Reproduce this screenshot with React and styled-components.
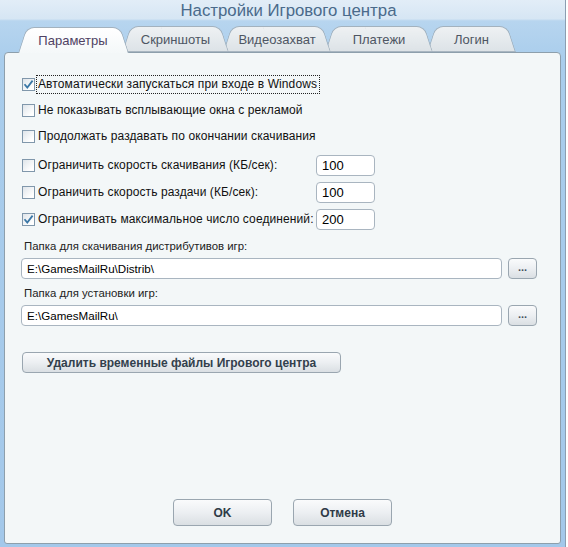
import React from 'react';
import styled, { createGlobalStyle, css } from 'styled-components';

const GlobalStyle = createGlobalStyle`
  html, body {
    margin: 0;
    padding: 0;
    background: #ffffff;
  }
  body {
    font-family: 'Liberation Sans', Arial, sans-serif;
    font-size: 12px;
    color: #111;
  }
`;

const Window = styled.div`
  width: 566px;
  height: 547px;
  box-sizing: border-box;
  border-right: 1px solid #8b9eb1;
  background: linear-gradient(
    180deg,
    #e2edf7 0px,
    #d6e6f4 19px,
    #c3dbf0 20px,
    #b7d5ef 21px,
    #a9cdec 60px,
    #a3c8ea 100%
  );
  display: flex;
  flex-direction: column;
`;

const TitleBar = styled.div`
  height: 20px;
  line-height: 21px;
  text-align: center;
  font-size: 16.8px;
  color: #4a6a8b;
  padding-left: 12px;
`;

const TabStrip = styled.div`
  height: 32px;
  display: flex;
  align-items: flex-end;
  padding-left: 18px;
`;

const Tab = styled.div`
  position: relative;
  height: 26px;
  width: ${(p) => p.$w}px;
  margin-left: ${(p) => (p.$first ? 0 : -6)}px;
  margin-bottom: ${(p) => (p.$active ? -1 : 0)}px;
  z-index: ${(p) => (p.$active ? 10 : 5 - p.$index)};
  display: flex;
  align-items: center;
  justify-content: center;
  font-size: 13px;
  color: ${(p) => (p.$active ? '#4f4263' : '#4e5663')};
  padding-top: 1px;
  box-sizing: border-box;

  &::before,
  &::after {
    content: '';
    position: absolute;
    top: 0;
    bottom: 0;
    width: 55%;
    transform-origin: bottom;
    border-top: 1px solid #a3b2be;
    ${(p) =>
      p.$active
        ? css`
            background: linear-gradient(180deg, #ffffff 0%, #f4f8f9 100%);
          `
        : css`
            background: linear-gradient(180deg, #eef1f3 0%, #dde3e7 100%);
            border-bottom: 1px solid #a9b6c1;
          `}
  }
  &::before {
    left: 0;
    border-left: 1px solid #a3b2be;
    border-top-left-radius: 8px;
    transform: skewX(-18deg);
  }
  &::after {
    right: 0;
    border-right: 1px solid #a3b2be;
    border-top-right-radius: 8px;
    transform: skewX(18deg);
  }
`;

const TabText = styled.span`
  position: relative;
  z-index: 1;
`;

const Panel = styled.div`
  flex: 1;
  margin: 0 4px 3px 4px;
  border: 1px solid #8d9fac;
  border-radius: 4px 4px 3px 3px;
  background: #f3f7f8;
  padding: 18px 20px 17px 16px;
  display: flex;
  flex-direction: column;
`;

const CheckRow = styled.div`
  height: 26px;
  display: flex;
  align-items: center;
`;

const FieldRow = styled.div`
  height: 27px;
  margin-top: ${(p) => p.$mt || 0}px;
  display: grid;
  grid-template-columns: 295px 59px;
  align-items: center;
`;

const Check = styled.span`
  width: 11px;
  height: 11px;
  flex: none;
  border: 1px solid #8097ab;
  background: linear-gradient(135deg, #dfe5ea 0%, #ffffff 80%);
  margin: 0 3px 0 1px;
  display: inline-flex;
  align-items: center;
  justify-content: center;
`;

const CheckLabel = styled.label`
  display: flex;
  align-items: center;
  white-space: nowrap;
  letter-spacing: 0.1px;
`;

const LabelText = styled.span`
  padding: 1px 2px 2px 0;
  ${(p) =>
    p.$focus &&
    css`
      outline: 1px dotted #222;
      outline-offset: 0px;
      padding: 1px 2px 2px 1px;
      margin-left: -1px;
    `}
`;

const SmallInput = styled.div`
  height: 21px;
  box-sizing: border-box;
  border: 1px solid #a9b5c0;
  border-radius: 4px;
  background: #fff;
  font-size: 13px;
  line-height: 19px;
  padding-left: 5px;
  color: #000;
`;

const FolderLabel = styled.div`
  margin-top: ${(p) => p.$mt}px;
  padding-left: 3px;
  height: 16px;
  line-height: 16px;
  font-size: 11.4px;
  color: #222;
`;

const PathRow = styled.div`
  margin-top: 4px;
  display: flex;
  gap: 6px;
  align-items: center;
`;

const PathInput = styled.div`
  width: 481px;
  height: 21px;
  box-sizing: border-box;
  border: 1px solid #a9b5c0;
  border-radius: 4px;
  background: #fff;
  font-size: 11.6px;
  line-height: 19px;
  padding-left: 5px;
  color: #000;
`;

const buttonBase = css`
  box-sizing: border-box;
  border: 1px solid #9aa6b0;
  border-radius: 4px;
  background: linear-gradient(180deg, #fafbfc 0%, #eceff2 50%, #dadfe3 100%);
  display: flex;
  align-items: center;
  justify-content: center;
  font-family: 'Liberation Sans', Arial, sans-serif;
  color: #2d3a46;
  padding: 0;
`;

const DotsButton = styled.button`
  ${buttonBase};
  width: 29px;
  height: 21px;
  font-size: 11px;
  font-weight: bold;
  line-height: 1;
  padding-bottom: 3px;
  color: #44505c;
`;

const WideButton = styled.button`
  ${buttonBase};
  margin-top: 26px;
  margin-left: 1px;
  width: 319px;
  height: 21px;
  font-size: 12px;
  font-weight: bold;
  color: #33404c;
`;

const Footer = styled.div`
  margin-top: auto;
  display: flex;
  justify-content: center;
  gap: 21px;
  padding-left: 4px;
`;

const DialogButton = styled.button`
  ${buttonBase};
  width: 99px;
  height: 27px;
  font-size: 12px;
  font-weight: bold;
  color: #2f3b47;
`;

const CheckMark = () => (
  <svg width="11" height="11" viewBox="0 0 11 11">
    <path d="M1.5 5.2 L4.3 8.6 L9.6 1.6" fill="none" stroke="#3a77a6" strokeWidth="1.8" />
  </svg>
);

const CheckItem = ({ checked, focus, children }) => (
  <CheckLabel>
    <Check>{checked && <CheckMark />}</Check>
    <LabelText $focus={focus}>{children}</LabelText>
  </CheckLabel>
);

const tabs = [
  { title: 'Параметры', w: 110 },
  { title: 'Скриншоты', w: 107 },
  { title: 'Видеозахват', w: 108 },
  { title: 'Платежи', w: 108 },
  { title: 'Логин', w: 89 },
];

export default function App() {
  return (
    <>
      <GlobalStyle />
      <Window>
        <TitleBar>Настройки Игрового центра</TitleBar>
        <TabStrip>
          {tabs.map((t, i) => (
            <Tab key={t.title} $w={t.w} $first={i === 0} $active={i === 0} $index={i}>
              <TabText>{t.title}</TabText>
            </Tab>
          ))}
        </TabStrip>
        <Panel>
          <CheckRow>
            <CheckItem checked focus>
              Автоматически запускаться при входе в Windows
            </CheckItem>
          </CheckRow>
          <CheckRow>
            <CheckItem>Не показывать всплывающие окна с рекламой</CheckItem>
          </CheckRow>
          <CheckRow>
            <CheckItem>Продолжать раздавать по окончании скачивания</CheckItem>
          </CheckRow>
          <FieldRow $mt={3}>
            <CheckItem>Ограничить скорость скачивания (КБ/сек):</CheckItem>
            <SmallInput>100</SmallInput>
          </FieldRow>
          <FieldRow>
            <CheckItem>Ограничить скорость раздачи (КБ/сек):</CheckItem>
            <SmallInput>100</SmallInput>
          </FieldRow>
          <FieldRow>
            <CheckItem checked>Ограничивать максимальное число соединений:</CheckItem>
            <SmallInput>200</SmallInput>
          </FieldRow>
          <FolderLabel $mt={5}>Папка для скачивания дистрибутивов игр:</FolderLabel>
          <PathRow>
            <PathInput>E:\GamesMailRu\Distrib\</PathInput>
            <DotsButton>...</DotsButton>
          </PathRow>
          <FolderLabel $mt={6}>Папка для установки игр:</FolderLabel>
          <PathRow>
            <PathInput>E:\GamesMailRu\</PathInput>
            <DotsButton>...</DotsButton>
          </PathRow>
          <WideButton>Удалить временные файлы Игрового центра</WideButton>
          <Footer>
            <DialogButton>OK</DialogButton>
            <DialogButton>Отмена</DialogButton>
          </Footer>
        </Panel>
      </Window>
    </>
  );
}
